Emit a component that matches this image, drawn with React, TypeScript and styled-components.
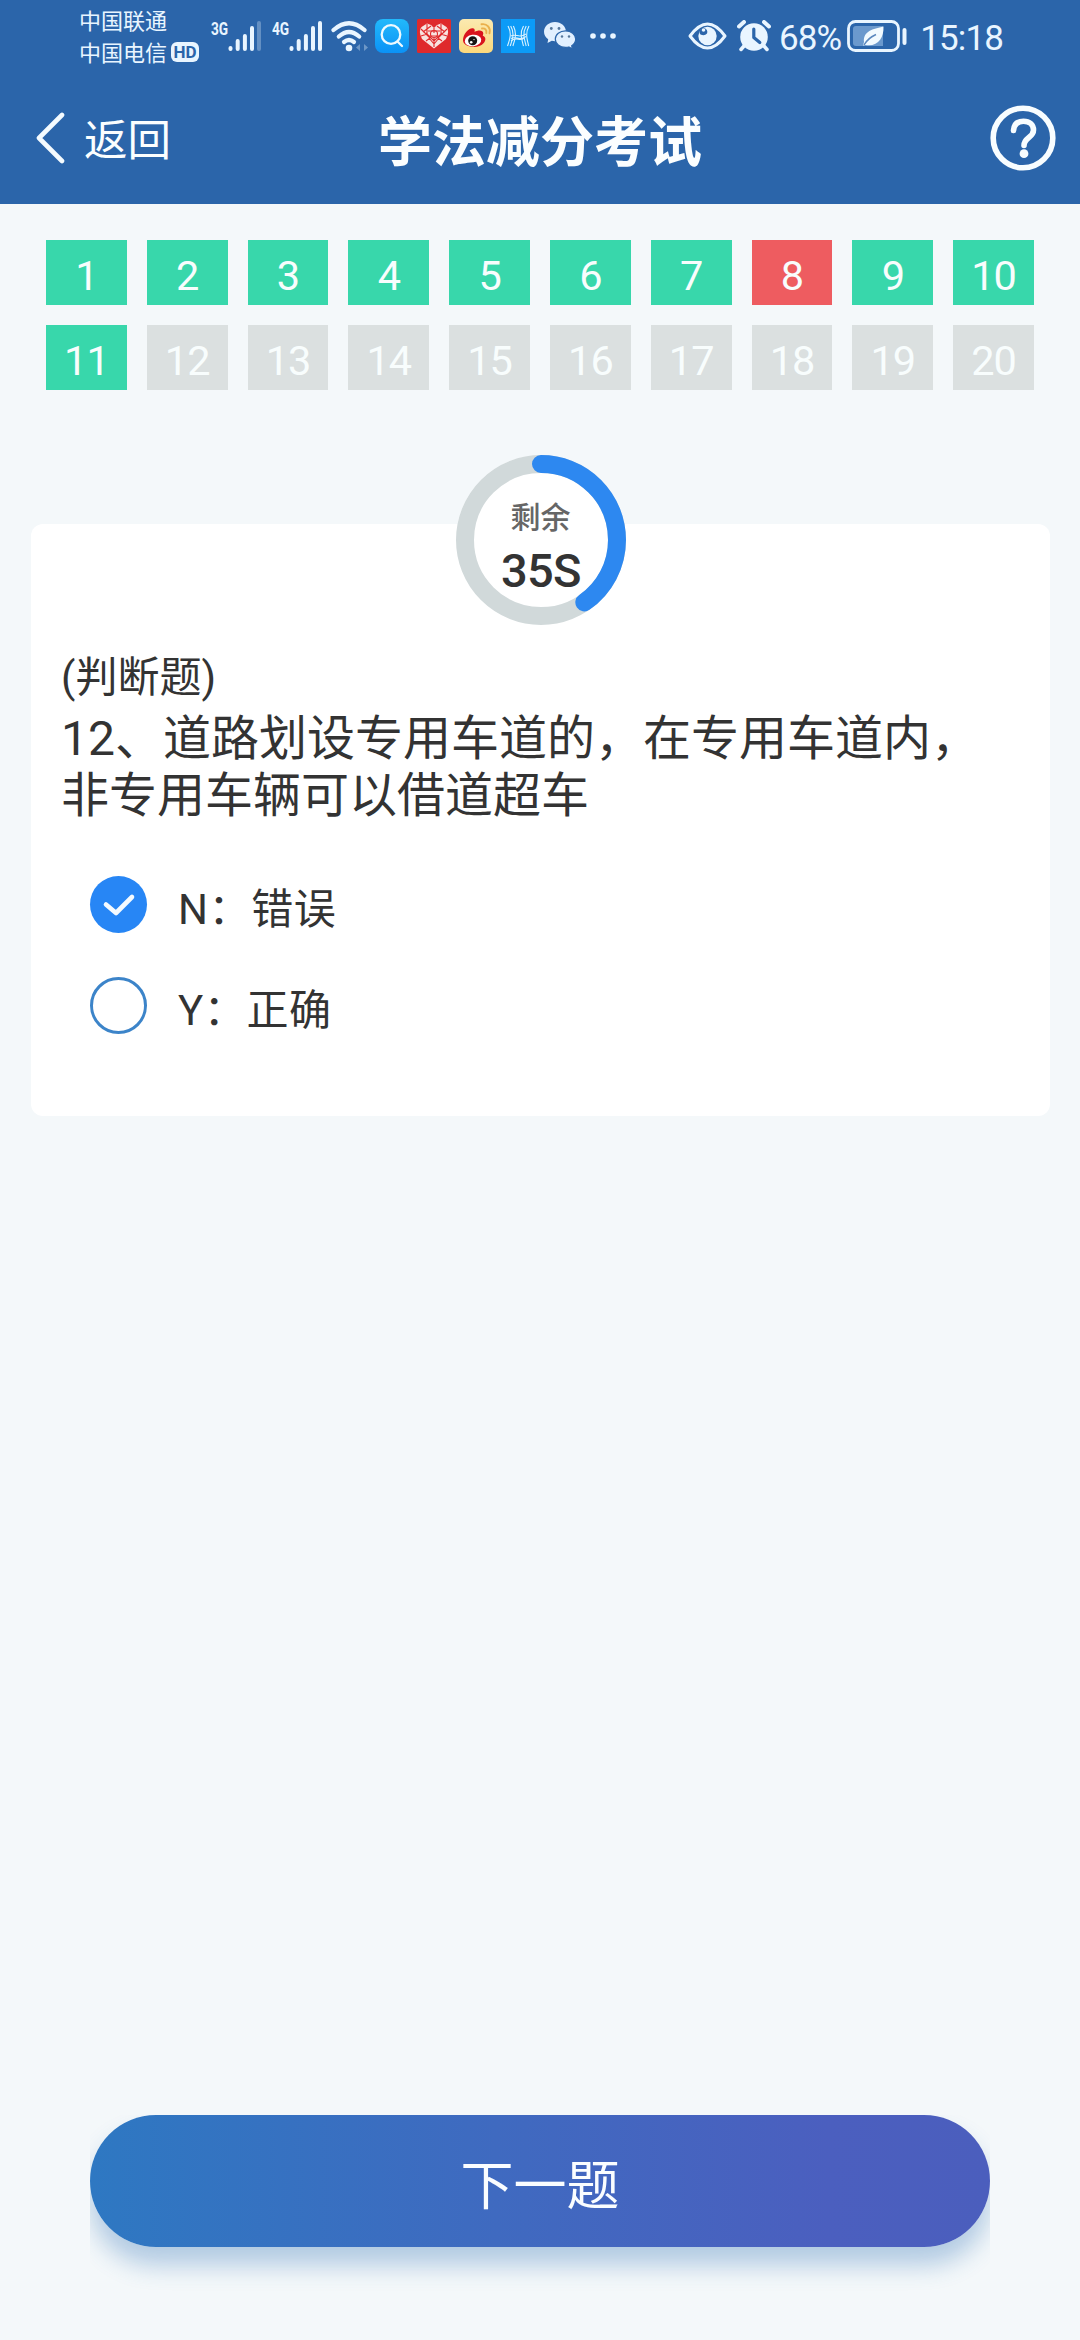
import React from "react";
import styled, { createGlobalStyle } from "styled-components";

const GlobalStyle = createGlobalStyle`
  * { box-sizing: border-box; }
  body {
    margin: 0;
    background: #f4f8fa;
    font-family: Roboto, "Noto Sans CJK SC", sans-serif;
    color: #333;
  }
`;

const Screen = styled.div`
  width: 1080px;
  height: 2340px;
  display: flex;
  flex-direction: column;
  background: #f4f8fa;
  overflow: hidden;
`;

const Top = styled.header`
  background: #2b65aa;
  height: 204px;
  flex: none;
  display: flex;
  flex-direction: column;
`;

const StatusBar = styled.div`
  height: 72px;
  display: flex;
  align-items: center;
  padding: 0 77px 0 79px;
  color: #e9f5ff;
`;

const Carriers = styled.div`
  display: flex;
  flex-direction: column;
  width: 132px;
  padding-bottom: 2px;
`;

const Carrier = styled.div`
  display: flex;
  align-items: center;
  gap: 4px;
  font-family: "Noto Sans CJK SC", sans-serif;
  font-size: 22px;
  line-height: 32px;
  height: 32px;
`;

const HdBadge = styled.span`
  width: 28px;
  height: 20px;
  margin-top: 2px;
  border-radius: 6px;
  background: #e9f5ff;
  color: #2b65aa;
  font: 700 17px/20px Roboto, sans-serif;
  text-align: center;
`;

const Signal = styled.div`
  display: flex;
  height: 32px;
  width: 61px;
`;

const Network = styled.span`
  width: 17px;
  font: 700 19px/17px Roboto, sans-serif;
  transform: scaleX(0.72);
  transform-origin: left;
  height: 17px;
`;

const Glyph = styled.svg<{ $w: number; $h: number; $gap?: number }>`
  width: ${(p) => p.$w}px;
  height: ${(p) => p.$h}px;
  margin-left: ${(p) => p.$gap ?? 0}px;
  flex: none;
  display: block;
`;

const StatusText = styled.span<{ $gap: number; $spacing: number }>`
  margin-left: ${(p) => p.$gap}px;
  font-size: 35px;
  line-height: 40px;
  letter-spacing: ${(p) => p.$spacing}px;
  padding-top: 5px;
  white-space: nowrap;
`;

const StatusRight = styled.div`
  margin-left: auto;
  display: flex;
  align-items: center;
`;

const NavBar = styled.nav`
  height: 132px;
  display: grid;
  grid-template-columns: 1fr auto 1fr;
  align-items: center;
  padding: 0 24px 0 36px;
  color: #fbfeff;
`;

const Back = styled.button`
  display: flex;
  align-items: center;
  gap: 19px;
  padding: 0;
  border: 0;
  background: none;
  color: inherit;
  font: 400 43.5px/60px "Noto Sans CJK SC", sans-serif;
`;

const Title = styled.h1`
  margin: 1px 0 0 -12px;
  font: 700 54px/72px "Noto Sans CJK SC", sans-serif;
`;

const Help = styled.button`
  justify-self: end;
  padding: 0;
  border: 0;
  background: none;
`;

const NumberGrid = styled.div`
  display: grid;
  grid-template-columns: repeat(10, 1fr);
  gap: 20px;
  padding: 36px 46px 0;
`;

const tileColors = { right: "#38d7ab", wrong: "#ee5c60", todo: "#dbe0e0" };

const Tile = styled.div<{ $state: keyof typeof tileColors }>`
  height: 65px;
  display: flex;
  align-items: center;
  justify-content: center;
  padding-top: 6px;
  font-size: 41.5px;
  line-height: 56px;
  letter-spacing: -1px;
  color: #f8fdfd;
  background: ${(p) => tileColors[p.$state]};
`;

const Card = styled.section`
  margin: 134px 30px 0 31px;
  height: 592px;
  border-radius: 12px;
  background: #fff;
  padding: 0 30px;
  display: flex;
  flex-direction: column;
`;

const Timer = styled.div`
  align-self: center;
  margin-top: -69px;
  width: 170px;
  height: 170px;
  display: grid;
  flex: none;
  border-radius: 50%;
  background: #fff;
  > * { grid-area: 1 / 1; }
`;

const TimerText = styled.div`
  display: flex;
  flex-direction: column;
  align-items: center;
  padding-top: 40px;
`;

const TimerLabel = styled.span`
  font: 500 30px/40px "Noto Sans CJK SC", sans-serif;
  color: #666;
`;

const TimerValue = styled.span`
  margin-top: 6px;
  padding-left: 1px;
  font-size: 47px;
  line-height: 60px;
  letter-spacing: -0.7px;
  font-weight: 500;
  color: #333;
`;

const Kind = styled.p`
  margin: 24px 0 0;
  font-size: 42px;
  line-height: 58px;
`;

const Question = styled.p`
  margin: 3px 0 0;
  font-size: 48px;
  line-height: 57px;
`;

const Options = styled.div`
  display: flex;
  flex-direction: column;
  gap: 44px;
  padding: 52px 0 0 29px;
`;

const Option = styled.label`
  display: flex;
  align-items: center;
  gap: 31px;
  height: 57px;
  font-size: 42px;
  line-height: 57px;
`;

const Radio = styled.span<{ $checked: boolean }>`
  width: 57px;
  height: 57px;
  border-radius: 50%;
  display: flex;
  align-items: center;
  justify-content: center;
  background: ${(p) => (p.$checked ? "#2786f5" : "#fff")};
  border: ${(p) => (p.$checked ? "0" : "3px solid #3c84c9")};
`;

const OptionText = styled.span`
  padding-top: 9px;
  letter-spacing: 0.6px;
`;

const Footer = styled.footer`
  margin: auto 90px 0;
  padding-bottom: 93px;
  overflow: hidden;
`;

const Next = styled.button`
  display: block;
  width: 100%;
  height: 132px;
  padding: 1px 0 0;
  border: 0;
  border-radius: 66px;
  background: linear-gradient(90deg, #2e78c2, #3f6ac0 45%, #4b5fbf 82%, #4b5ebd);
  box-shadow: 0 18px 24px rgba(43, 108, 180, 0.33);
  color: #fafdff;
  font: 400 53px/72px "Noto Sans CJK SC", sans-serif;
`;

const SignalBars = ({ weak }: { weak?: boolean }) => (
  <Glyph $w={34} $h={32} viewBox="0 0 34 32">
    <g stroke="#e9f5ff" strokeWidth="4" strokeLinecap="round">
      <path d="M2.500 29V28M9.700 29V21M16.900 29V16M24 29V8" />
      <path d="M31 29V3" opacity={weak ? 0.3 : 1} />
    </g>
  </Glyph>
);

const Wifi = () => (
  <Glyph $w={38} $h={32} $gap={-2} viewBox="0 0 38 32">
    <g fill="none" stroke="#e9f5ff" strokeWidth="4.200" strokeLinecap="round">
      <path d="M2.500 10Q18 -3.500 33.500 10" />
      <path d="M7.800 16.500Q18 7.500 28.200 16.500" />
      <path d="M13 22Q18 18 23 22" />
    </g>
    <circle cx="18" cy="28" r="3.300" fill="#e9f5ff" />
    <path d="M29 24v7l-4-3.500zM33 24v7l4-3.500z" fill="#e9f5ff" opacity="0.35" />
  </Glyph>
);

const SearchApp = () => (
  <Glyph $w={34} $h={34} $gap={6} viewBox="0 0 34 34">
    <defs>
      <linearGradient id="searchBg" x1="0" y1="0" x2="0" y2="1">
        <stop offset="0" stopColor="#22b9fb" />
        <stop offset="1" stopColor="#0b92f6" />
      </linearGradient>
    </defs>
    <rect width="34" height="34" rx="8" fill="url(#searchBg)" />
    <circle cx="16" cy="15.500" r="9.300" fill="none" stroke="#eefaff" strokeWidth="2.300" />
    <path d="M22.500 22.500l4.500 4.500" stroke="#eefaff" strokeWidth="2.300" strokeLinecap="round" />
  </Glyph>
);

const HeartApp = () => (
  <Glyph $w={34} $h={34} $gap={8} viewBox="0 0 34 34">
    <rect width="34" height="34" rx="1.500" fill="#df2a2c" />
    <path d="M17 29.500L5 20Q1 12 4.500 8L10 4.500L14 6L17 9L20 6L24 4.500L29.500 8Q33 12 29 20Z" fill="#f8e3e0" />
    <g fill="none" stroke="#df2a2c" strokeWidth="1.100">
      <path d="M4 10l9 9-4 3M10 5v10l-6 2M14 7l-8 6M30 10l-9 9 4 3M24 5v10l6 2M20 7l8 6M17 9v5M11 12h12M12 17h10M17 19v9M12 19l5 6 5-6M9 14l8 8 8-8" />
      <circle cx="17" cy="15" r="3.500" />
    </g>
  </Glyph>
);

const WeiboApp = () => (
  <Glyph $w={34} $h={34} $gap={8} viewBox="0 0 34 34">
    <defs>
      <linearGradient id="weiboBg" x1="0" y1="0" x2="0" y2="1">
        <stop offset="0" stopColor="#fbe9b0" />
        <stop offset="1" stopColor="#fbd87c" />
      </linearGradient>
    </defs>
    <rect width="34" height="34" rx="5" fill="url(#weiboBg)" />
    <path d="M4 21C4 15 10 8.500 14 9.200C16 9.600 16 11.500 15.500 13C19 11 24 10.800 24.300 14.500L23.800 16.800C27 18 27 21 25 23.800C22 27.500 17 28.300 13 27.800C8 27.200 4 25 4 21Z" fill="#d9141e" />
    <ellipse cx="14" cy="21.500" rx="8.300" ry="5.700" fill="#fff" transform="rotate(-8 14 21.500)" />
    <circle cx="13.700" cy="21.800" r="4.500" fill="#151515" />
    <circle cx="12.200" cy="23.300" r="1.300" fill="#fff" />
    <circle cx="15" cy="20.600" r=".7" fill="#fff" />
    <path d="M23 9.500c3-.5 5 1.500 4.300 4.500M22.500 5.300c5.500-1 9.500 3.500 8 9" fill="none" stroke="#eab04c" strokeWidth="1.900" strokeLinecap="round" />
  </Glyph>
);

const HealthApp = () => (
  <Glyph $w={34} $h={34} $gap={8} viewBox="0 0 34 34">
    <rect width="34" height="34" fill="#0c9bf7" />
    <g fill="none" stroke="#d9f2ff" strokeWidth="1.100">
      <path d="M7 7c4 7 2 13-.5 20M9.700 7c4 7 2 13-.5 20M12.400 7c3.500 7 2 13-.5 20" />
      <path d="M22.500 7c-4 7-2 13 0 20M25.200 7c-4 7-2 13 0 20M28 7c-4 7-2 13-.3 20" />
      <path d="M10 17c5-3 8 3 15-2M10 19.500c5-3 8 3 15-2M10 22c5-5 9 1 13-3" />
    </g>
  </Glyph>
);

const Wechat = () => (
  <Glyph $w={32} $h={28} $gap={9} viewBox="0 0 32 28">
    <g fill="#e2f0ff">
      <path d="M11 0C4.900 0 0 4.300 0 9.700c0 3 1.600 5.700 4.200 7.500L3.500 21l4.300-2.200c1 .3 2.100.4 3.200.4C17.100 19.200 22 15 22 9.700S17.100 0 11 0z" />
      <path d="M21.500 8.800c-5.700 0-10.200 3.700-10.200 8.300s4.500 8.300 10.200 8.300c1.200 0 2.300-.1 3.300-.4L28.500 27l-.8-3.200c2.300-1.500 4-4 4-6.700 0-4.600-4.500-8.300-10.200-8.300z" stroke="#2b65aa" strokeWidth="1.200" />
    </g>
    <g fill="#55779b">
      <circle cx="7.300" cy="6.500" r="1.400" /><circle cx="15" cy="6.500" r="1.400" />
      <circle cx="18" cy="14.500" r="1.200" /><circle cx="25" cy="14.500" r="1.200" />
    </g>
  </Glyph>
);

const More = () => (
  <Glyph $w={26} $h={6} $gap={14} viewBox="0 0 26 6" fill="#e9f5ff">
    <circle cx="3" cy="3" r="2.800" /><circle cx="13" cy="3" r="2.800" /><circle cx="23" cy="3" r="2.800" />
  </Glyph>
);

const Eye = () => (
  <Glyph $w={39} $h={28} viewBox="0 0 39 28">
    <path d="M2 14Q19.500 -10 37 14Q19.500 38 2 14Z" fill="none" stroke="#e9f5ff" strokeWidth="3" strokeLinejoin="round" />
    <circle cx="19.500" cy="14" r="9.200" fill="#e9f5ff" />
    <path d="M11.500 8L15.500 5.500Q20.500 7.500 19 11.500Q16.500 14.500 12.500 12.500Q11 11 11.500 8Z" fill="#2b65aa" />
    <circle cx="15.500" cy="8" r="1.800" fill="#e9f5ff" />
  </Glyph>
);

const Alarm = () => (
  <Glyph $w={34} $h={32} $gap={10} viewBox="0 0 34 32">
    <circle cx="17" cy="17" r="13.800" fill="#e9f5ff" />
    <path d="M2 6.500L7 2M32 6.500L27 2" stroke="#e9f5ff" strokeWidth="4" strokeLinecap="round" />
    <path d="M7 26l-3 3.500M27 26l3 3.500" stroke="#e9f5ff" strokeWidth="3.500" strokeLinecap="round" />
    <path d="M16.800 9v8.500l6 5" fill="none" stroke="#2b65aa" strokeWidth="3.200" strokeLinecap="round" strokeLinejoin="round" />
  </Glyph>
);

const Battery = () => (
  <Glyph $w={60} $h={32} $gap={6} viewBox="0 0 60 32">
    <rect x="1.500" y="1.500" width="50" height="29" rx="7" fill="none" stroke="#e9f5ff" strokeWidth="2.800" />
    <path d="M9 6H36V26H9Q6 26 6 23V9Q6 6 9 6Z" fill="#6b99cd" />
    <path d="M36.500 6.500C26 9 16 11 17 22L16 25.500L18.500 25C31 27 37 18 36.500 6.500Z" fill="#f2faff" />
    <path d="M17 25Q21 18 29 14.500" fill="none" stroke="#5b88be" strokeWidth="1.500" />
    <rect x="55.500" y="8" width="4" height="17" rx="2" fill="#e9f5ff" />
  </Glyph>
);

type Item = { n: number; state: keyof typeof tileColors };
const items: Item[] = Array.from({ length: 20 }, (_, i) => ({
  n: i + 1,
  state: i + 1 === 8 ? "wrong" : i + 1 <= 11 ? "right" : "todo",
}));

const options = [
  { text: "N：错误", checked: true },
  { text: "Y：正确", checked: false },
];

const RING = 2 * Math.PI * 76;

export default function App() {
  return (
    <>
      <GlobalStyle />
      <Screen lang="zh-CN">
        <Top>
          <StatusBar>
            <Carriers>
              <Carrier>中国联通</Carrier>
              <Carrier>中国电信<HdBadge>HD</HdBadge></Carrier>
            </Carriers>
            <Signal><Network>3G</Network><SignalBars weak /></Signal>
            <Signal><Network>4G</Network><SignalBars /></Signal>
            <Wifi />
            <SearchApp />
            <HeartApp />
            <WeiboApp />
            <HealthApp />
            <Wechat />
            <More />
            <StatusRight>
              <Eye />
              <Alarm />
              <StatusText $gap={8} $spacing={-0.9}>68%</StatusText>
              <Battery />
              <StatusText $gap={13} $spacing={-0.9}>15:18</StatusText>
            </StatusRight>
          </StatusBar>
          <NavBar>
            <Back>
              <Glyph $w={29} $h={52} viewBox="0 0 29 52">
                <path d="M26 3L3 26L26 49" fill="none" stroke="#f4fbff" strokeWidth="4.600" strokeLinecap="round" strokeLinejoin="round" />
              </Glyph>
              返回
            </Back>
            <Title>学法减分考试</Title>
            <Help aria-label="帮助">
              <Glyph $w={66} $h={66} viewBox="0 0 66 66">
                <circle cx="33" cy="33" r="29.800" fill="none" stroke="#f8fdff" strokeWidth="5.600" />
                <path d="M23.500 25.500C24 18.500 28 16.200 33.500 16.200C39.500 16.200 43.500 19.500 43.500 25C43.500 33 34 32 34 40.500" fill="none" stroke="#f8fdff" strokeWidth="5.600" strokeLinecap="round" />
                <circle cx="34" cy="48.700" r="4.400" fill="#f8fdff" />
              </Glyph>
            </Help>
          </NavBar>
        </Top>

        <NumberGrid>
          {items.map((it) => (
            <Tile key={it.n} $state={it.state}>{it.n}</Tile>
          ))}
        </NumberGrid>

        <Card>
          <Timer>
            <Glyph $w={170} $h={170} viewBox="0 0 170 170">
              <g fill="none" strokeWidth="18" transform="rotate(-90 85 85)">
                <circle cx="85" cy="85" r="76" stroke="#d1d9da" />
                <circle
                  cx="85" cy="85" r="76" stroke="#2d88f0" strokeLinecap="round"
                  strokeDasharray={`${(RING * 145) / 360} ${RING}`}
                />
              </g>
            </Glyph>
            <TimerText>
              <TimerLabel>剩余</TimerLabel>
              <TimerValue>35S</TimerValue>
            </TimerText>
          </Timer>
          <Kind>(判断题)</Kind>
          <Question>12、道路划设专用车道的，在专用车道内，非专用车辆可以借道超车</Question>
          <Options>
            {options.map((o) => (
              <Option key={o.text}>
                <Radio $checked={o.checked}>
                  {o.checked && (
                    <Glyph $w={34} $h={26} viewBox="0 0 34 26">
                      <path d="M4 12.500L14 21L30 5" fill="none" stroke="#f4faff" strokeWidth="4.600" strokeLinecap="round" strokeLinejoin="round" />
                    </Glyph>
                  )}
                </Radio>
                <OptionText>{o.text}</OptionText>
              </Option>
            ))}
          </Options>
        </Card>

        <Footer>
          <Next>下一题</Next>
        </Footer>
      </Screen>
    </>
  );
}
